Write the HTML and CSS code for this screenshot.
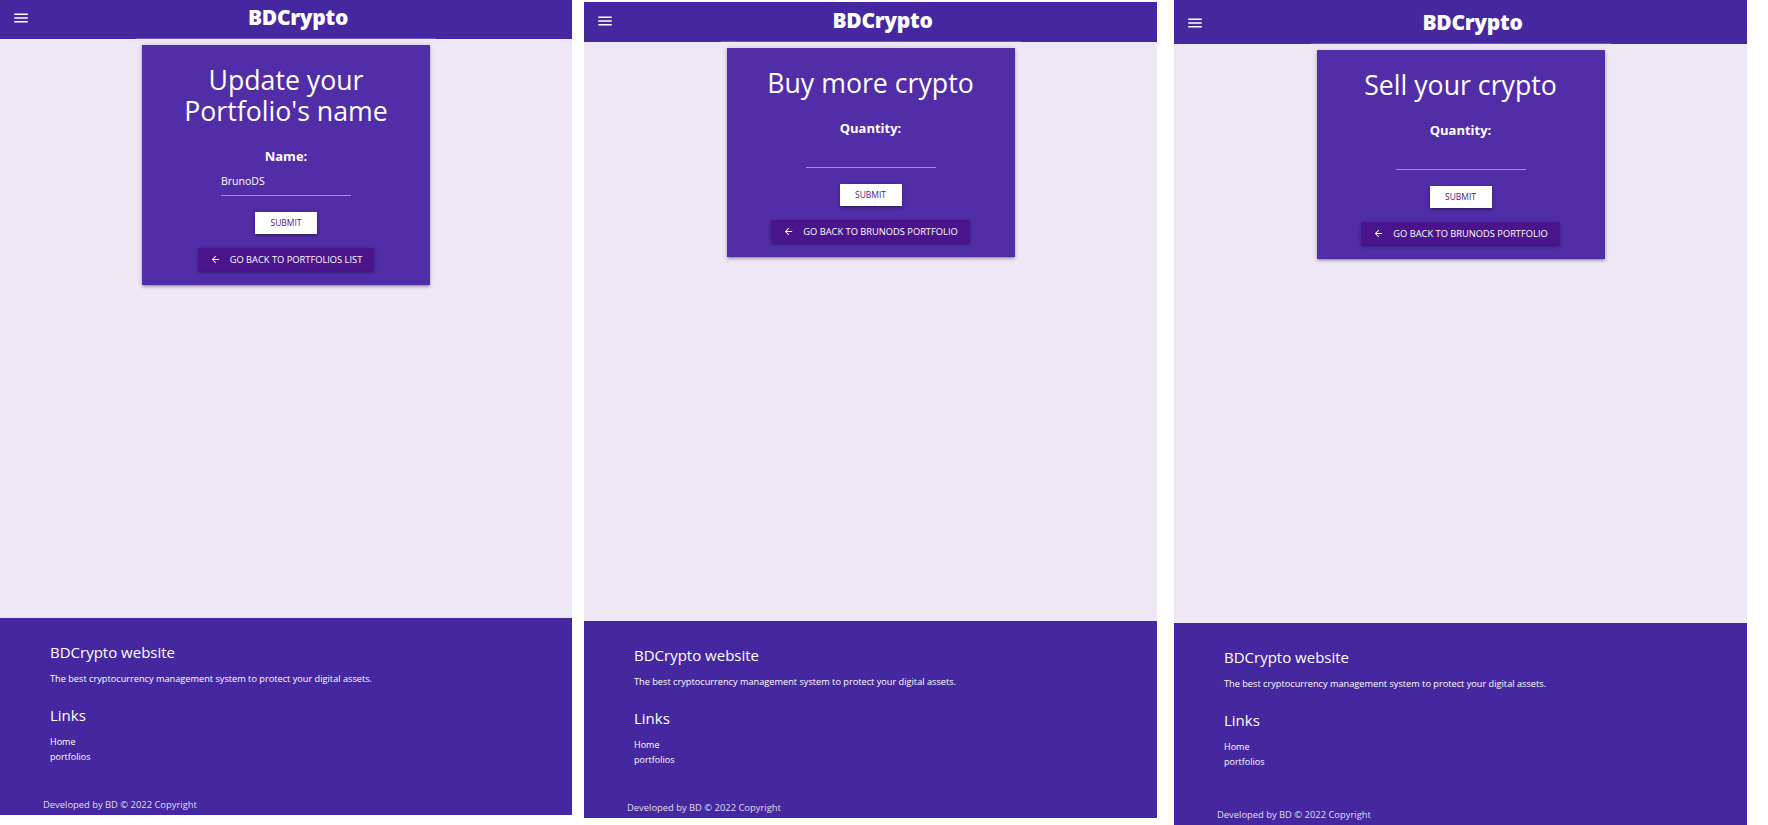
FILE: index.html
```html
<!DOCTYPE html>
<html lang="en">
<head>
<meta charset="utf-8">
<title>BDCrypto</title>
<link rel="stylesheet" href="styles.css">
</head>
<body>
<div class="shots">

  <section class="page page--a">
    <header class="nav">
      <span class="menu"><svg viewBox="0 0 24 24" width="18" height="18"><path fill="#fff" d="M3 18h18v-2H3v2zm0-5h18v-2H3v2zm0-7v2h18V6H3z"/></svg></span>
      <span class="brand">BDCrypto</span>
    </header>
    <main class="content">
      <div class="card">
        <h4 class="card-title">Update your<br>Portfolio's name</h4>
        <div class="form">
          <label class="label">Name:</label>
          <div class="field">BrunoDS</div>
          <span class="btn-submit">SUBMIT</span>
        </div>
        <span class="btn-back"><svg viewBox="0 0 24 24" width="11" height="11"><path fill="#fff" d="M20 11H7.83l5.59-5.59L12 4l-8 8 8 8 1.41-1.41L7.83 13H20v-2z"/></svg>GO BACK TO PORTFOLIOS LIST</span>
      </div>
    </main>
    <footer class="foot">
      <div class="foot-body">
        <h5 class="foot-title">BDCrypto website</h5>
        <p class="foot-text">The best cryptocurrency management system to protect your digital assets.</p>
        <h5 class="foot-title foot-title--links">Links</h5>
        <ul class="foot-links"><li>Home</li><li>portfolios</li></ul>
      </div>
      <div class="foot-copy">Developed by BD © 2022 Copyright</div>
    </footer>
  </section>

  <section class="page page--b">
    <header class="nav">
      <span class="menu"><svg viewBox="0 0 24 24" width="18" height="18"><path fill="#fff" d="M3 18h18v-2H3v2zm0-5h18v-2H3v2zm0-7v2h18V6H3z"/></svg></span>
      <span class="brand">BDCrypto</span>
    </header>
    <main class="content">
      <div class="card">
        <h4 class="card-title">Buy more crypto</h4>
        <div class="form">
          <label class="label">Quantity:</label>
          <div class="field"></div>
          <span class="btn-submit">SUBMIT</span>
        </div>
        <span class="btn-back"><svg viewBox="0 0 24 24" width="11" height="11"><path fill="#fff" d="M20 11H7.83l5.59-5.59L12 4l-8 8 8 8 1.41-1.41L7.83 13H20v-2z"/></svg>GO BACK TO BRUNODS PORTFOLIO</span>
      </div>
    </main>
    <footer class="foot">
      <div class="foot-body">
        <h5 class="foot-title">BDCrypto website</h5>
        <p class="foot-text">The best cryptocurrency management system to protect your digital assets.</p>
        <h5 class="foot-title foot-title--links">Links</h5>
        <ul class="foot-links"><li>Home</li><li>portfolios</li></ul>
      </div>
      <div class="foot-copy">Developed by BD © 2022 Copyright</div>
    </footer>
  </section>

  <section class="page page--c">
    <header class="nav">
      <span class="menu"><svg viewBox="0 0 24 24" width="18" height="18"><path fill="#fff" d="M3 18h18v-2H3v2zm0-5h18v-2H3v2zm0-7v2h18V6H3z"/></svg></span>
      <span class="brand">BDCrypto</span>
    </header>
    <main class="content">
      <div class="card">
        <h4 class="card-title">Sell your crypto</h4>
        <div class="form">
          <label class="label">Quantity:</label>
          <div class="field"></div>
          <span class="btn-submit">SUBMIT</span>
        </div>
        <span class="btn-back"><svg viewBox="0 0 24 24" width="11" height="11"><path fill="#fff" d="M20 11H7.83l5.59-5.59L12 4l-8 8 8 8 1.41-1.41L7.83 13H20v-2z"/></svg>GO BACK TO BRUNODS PORTFOLIO</span>
      </div>
    </main>
    <footer class="foot">
      <div class="foot-body">
        <h5 class="foot-title">BDCrypto website</h5>
        <p class="foot-text">The best cryptocurrency management system to protect your digital assets.</p>
        <h5 class="foot-title foot-title--links">Links</h5>
        <ul class="foot-links"><li>Home</li><li>portfolios</li></ul>
      </div>
      <div class="foot-copy">Developed by BD © 2022 Copyright</div>
    </footer>
  </section>

</div>
</body>
</html>
```

FILE: styles.css
```css
* { box-sizing: border-box; }

html, body {
  margin: 0;
  padding: 0;
  background: #ffffff;
  font-family: "Open Sans", "Noto Sans", sans-serif;
  color: #fff;
}

.shots {
  display: flex;
  align-items: flex-start;
  height: 825px;
  overflow: hidden;
}

.page {
  width: 573px;
  height: 816px;
  flex: none;
  display: flex;
  flex-direction: column;
  background: #ede7f6;
}

.page--a { width: 572px; margin-top: -1px; }
.page--b { margin-left: 12px; margin-top: 2px; }
.page--c { margin-left: 17px; height: 825px; }
.page--c .nav { height: 44px; padding-top: 4px; }
.page--c .foot { height: 202px; }

/* header */
.nav {
  position: relative;
  height: 40px;
  flex: none;
  display: flex;
  align-items: center;
  padding-left: 12px;
  background: #4527a0;
}

.nav::after {
  content: "";
  position: absolute;
  left: 50%;
  bottom: 0;
  width: 300px;
  height: 1px;
  transform: translateX(-50%);
  background: #6e57b6;
}

.menu {
  width: 18px;
  height: 18px;
  margin-bottom: 3px;
  display: flex;
}

.brand {
  flex: 1;
  text-align: center;
  padding-right: 6px;
  margin-bottom: 4px;
  font-size: 21px;
  font-weight: 800;
  line-height: 28px;
  letter-spacing: -0.3px;
}

/* card */
.content {
  flex: 1;
  display: flex;
  justify-content: center;
  align-items: flex-start;
  padding-top: 6px;
}

.card {
  width: 288px;
  background: #512da8;
  padding: 19px 0 14px;
  display: flex;
  flex-direction: column;
  align-items: center;
  box-shadow: 0 2px 2px 0 rgba(0,0,0,0.14), 0 3px 1px -2px rgba(0,0,0,0.12), 0 1px 5px 0 rgba(0,0,0,0.2);
}

.card-title {
  margin: 0;
  font-size: 26.7px;
  font-weight: 400;
  line-height: 31px;
  text-align: center;
}

.form {
  margin-top: 21px;
  display: flex;
  flex-direction: column;
  align-items: center;
}

.label {
  font-size: 13px;
  font-weight: 700;
  line-height: 18px;
}

.field {
  width: 130px;
  height: 28px;
  margin-top: 3px;
  border-bottom: 1px solid #9e9e9e;
  font-size: 10.5px;
  line-height: 27px;
  text-align: left;
}

.btn-submit {
  margin-top: 16px;
  width: 62px;
  height: 22px;
  background: #fff;
  color: #4a148c;
  font-size: 8.5px;
  line-height: 22px;
  text-align: center;
  box-shadow: 0 2px 2px 0 rgba(0,0,0,0.14), 0 3px 1px -2px rgba(0,0,0,0.12), 0 1px 5px 0 rgba(0,0,0,0.2);
}

.btn-back {
  margin-top: 14px;
  height: 23px;
  padding: 0 12px;
  display: flex;
  align-items: center;
  gap: 9px;
  background: #4a148c;
  font-size: 9.3px;
  line-height: 23px;
  box-shadow: 0 2px 2px 0 rgba(0,0,0,0.14), 0 3px 1px -2px rgba(0,0,0,0.12), 0 1px 5px 0 rgba(0,0,0,0.2);
}

.btn-back svg { flex: none; }

/* footer */
.foot {
  height: 197px;
  flex: none;
  display: flex;
  flex-direction: column;
  background: #4527a0;
}

.foot-body {
  flex: 1;
  padding: 24px 0 0 50px;
}

.foot-title {
  margin: 0;
  font-size: 15px;
  font-weight: 400;
  line-height: 20px;
}

.foot-title--links { margin-top: 20px; }

.foot-text {
  margin: 10px 0 0;
  font-size: 9.2px;
  line-height: 13px;
}

.foot-links {
  list-style: none;
  margin: 9px 0 0;
  padding: 0;
  font-size: 9px;
  line-height: 15px;
}

.foot-copy {
  height: 35px;
  padding: 18px 0 0 43px;
  font-size: 9.4px;
  line-height: 13px;
  color: rgba(255,255,255,0.85);
}
```
